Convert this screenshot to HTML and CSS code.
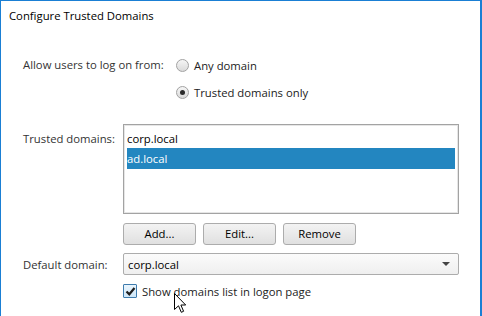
FILE: index.html
```html
<!DOCTYPE html>
<html>
<head>
<meta charset="utf-8">
<link rel="stylesheet" href="styles.css">
</head>
<body>
<div class="window">
  <div class="title">Configure Trusted Domains</div>

  <div class="form">
    <div class="label label-allow">Allow users to log on from:</div>
    <div class="radios">
      <label class="radio-row"><span class="radio"></span><span>Any domain</span></label>
      <label class="radio-row"><span class="radio checked"></span><span>Trusted domains only</span></label>
    </div>

    <div class="label label-list">Trusted domains:</div>
    <div class="list-col">
      <div class="listbox">
        <div class="item">corp.local</div>
        <div class="item selected">ad.local</div>
      </div>
      <div class="buttons">
        <button class="btn">Add...</button>
        <button class="btn">Edit...</button>
        <button class="btn">Remove</button>
      </div>
    </div>

    <div class="label label-default">Default domain:</div>
    <div class="combo">
      <span>corp.local</span>
      <svg class="arrow" width="8" height="4" viewBox="0 0 8 4"><path d="M0 0 H8 L4 4 Z" fill="#444"/></svg>
    </div>

    <div></div>
    <label class="check-row">
      <span class="checkbox">
        <svg width="11" height="11" viewBox="0 0 11 11"><path d="M1.5 5.5 L4.3 8.3 L9.5 2" fill="none" stroke="#1f1f1f" stroke-width="2.2"/></svg>
      </span>
      <span>Show domains list in logon page</span>
    </label>
  </div>

  <svg class="cursor" width="13" height="21" viewBox="0 0 13 21">
    <path d="M0.5 0.5 L0.5 16.5 L4.5 12.8 L7.3 19.3 L9.6 18.3 L6.9 12 L11.7 12 Z" fill="#fff" stroke="#000" stroke-width="1" stroke-linejoin="miter"/>
  </svg>
</div>
</body>
</html>
```

FILE: styles.css
```css
* { box-sizing: border-box; }
html, body { margin: 0; padding: 0; background: #fff; }
body {
  font-family: "Open Sans", "Noto Sans", sans-serif;
  font-size: 11.3px;
  color: #000;
}
.window {
  position: relative;
  width: 482px;
  height: 316px;
  border-top: 1px solid #1a7fd4;
  border-left: 1px solid #1a7fd4;
  border-right: 2px solid #1a7fd4;
  background: #fff;
  overflow: hidden;
}
.title {
  padding: 7px 0 0 8px;
  line-height: 16px;
  height: 23px;
  color: #000;
}
.form {
  display: grid;
  grid-template-columns: 100px 336px;
  padding-left: 22px;
  margin-top: 31px;
}
.label {
  color: #333;
  line-height: 16px;
  white-space: nowrap;
}
.label-allow { padding-top: 2px; }
.radios { display: flex; flex-direction: column; gap: 7px; }
.radio-row {
  display: flex;
  align-items: center;
  height: 20px;
  gap: 5px;
  margin-left: 53px;
  color: #222;
}
.radio {
  width: 13px; height: 13px;
  border-radius: 50%;
  border: 1px solid #a2a2a2;
  background: linear-gradient(#f6f6f6, #dadada);
  position: relative;
  flex: none;
}
.radio.checked::after {
  content: "";
  position: absolute;
  left: 3px; top: 3px;
  width: 5px; height: 5px;
  border-radius: 50%;
  background: #2b2b2b;
}
.label-list { margin-top: 22px; padding-top: 7px; }
.list-col { margin-top: 22px; display: flex; flex-direction: column; }
.listbox {
  height: 90px;
  border: 1px solid #a3a3a3;
  box-shadow: inset 0 0 0 1px #e6e6e6;
  padding: 3px 3px;
}
.item {
  height: 20px;
  line-height: 21px;
  color: #000;
}
.item.selected { background: #2386c0; color: #fff; height: 21px; line-height: 21px; }
.buttons { display: flex; gap: 7px; margin-top: 9px; }
.btn {
  width: 73px;
  height: 22px;
  font-family: inherit;
  font-size: 11.3px;
  color: #000;
  border: 1px solid #acacac;
  border-radius: 3px;
  background: linear-gradient(#f3f3f3, #e0e0e0);
  padding: 0;
  line-height: 18px;
}
.label-default { margin-top: 8px; padding-top: 4px; }
.combo {
  margin-top: 8px;
  height: 22px;
  border: 1px solid #acacac;
  border-radius: 2px;
  background: linear-gradient(#fbfbfb, #efefef);
  display: flex;
  align-items: center;
  justify-content: space-between;
  padding: 0 8px 0 4px;
  color: #000;
}
.check-row {
  margin-top: 8px;
  display: flex;
  align-items: center;
  gap: 5px;
  height: 16px;
  color: #222;
}
.checkbox {
  width: 14px; height: 14px;
  border: 1px solid #3d7bad;
  border-radius: 1px;
  background: linear-gradient(#eaf5fd, #cfe7f8);
  display: flex; align-items: center; justify-content: center;
  flex: none;
}
.cursor {
  position: absolute;
  left: 173px;
  top: 292px;
}
```
